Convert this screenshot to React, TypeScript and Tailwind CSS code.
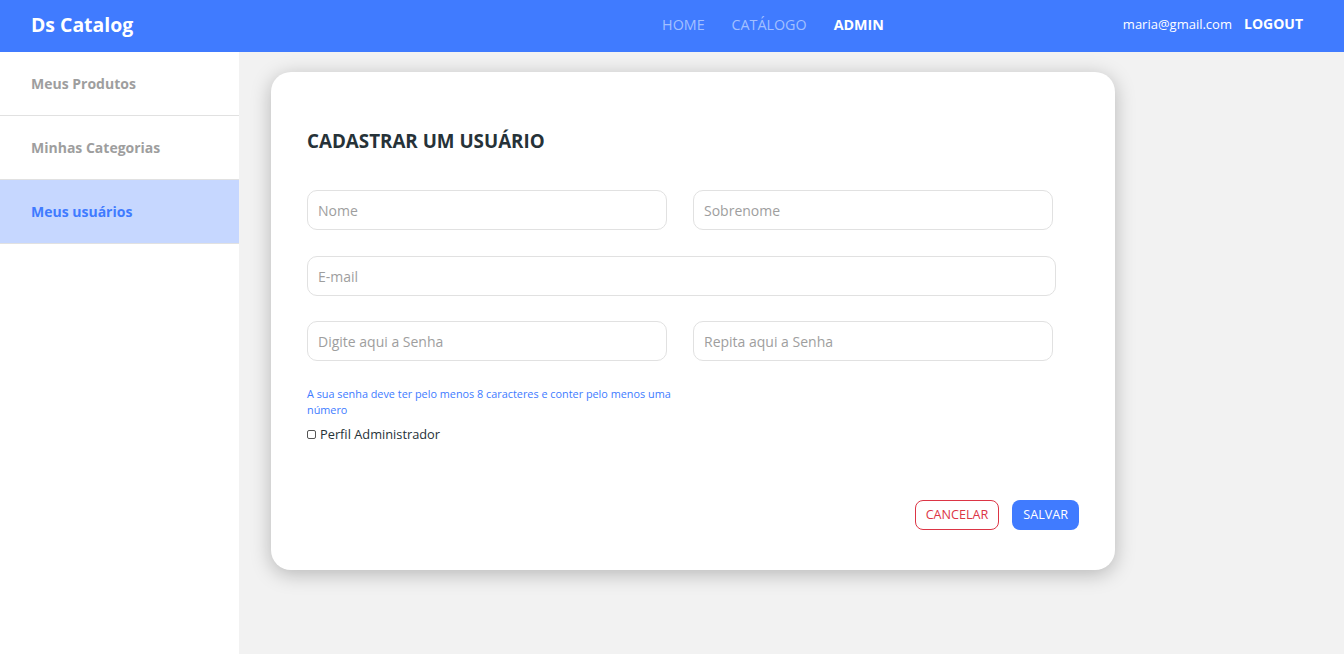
import { useState } from "react";

const font = { fontFamily: '"Open Sans", "Noto Sans", sans-serif' };

const Navbar = () => (
  <nav className="h-[52px] bg-[#407BFF] flex items-center px-[31px] pb-[3px] text-white">
    <a href="#" className="text-[19.4px] font-bold leading-none">Ds Catalog</a>
    <div className="flex items-center gap-[27px] ml-[529px] text-[14.3px] uppercase">
      <a href="#" className="text-[#A3C0FF]">Home</a>
      <a href="#" className="text-[#A3C0FF]">Catálogo</a>
      <a href="#" className="font-bold text-white">Admin</a>
    </div>
    <div className="ml-auto flex items-center gap-[12px] pr-[10px]">
      <span className="text-[13px]">maria@gmail.com</span>
      <a href="#" className="text-[14px] font-bold -mt-[2px]">LOGOUT</a>
    </div>
  </nav>
);

const Sidebar = () => {
  const items = ["Meus Produtos", "Minhas Categorias", "Meus usuários"];
  const active = 2;
  return (
    <aside className="w-[239px] bg-white shrink-0">
      {items.map((it, i) => (
        <div
          key={it}
          className={`h-[64px] flex items-center px-[31px] text-[14px] font-bold border-b border-[#E1E1E1] ${
            i === active ? "bg-[#C6D7FF] text-[#407BFF]" : "text-[#9E9E9E]"
          }`}
        >
          {it}
        </div>
      ))}
    </aside>
  );
};

const Field = ({ placeholder, w, type = "text" }: { placeholder: string; w: string; type?: string }) => (
  <input
    type={type}
    placeholder={placeholder}
    className={`${w} h-[40px] border border-[#E1E1E1] rounded-[10px] px-[10px] text-[14px] text-[#263238] placeholder:text-[#9E9E9E] outline-none`}
  />
);

export default function App() {
  const [admin, setAdmin] = useState(false);
  return (
    <div className="min-h-[654px] h-screen flex flex-col bg-[#F2F2F2]" style={font}>
      <Navbar />
      <div className="flex flex-1">
        <Sidebar />
        <main className="flex-1 pl-[32px] pt-[20px]">
          <div className="w-[844px] bg-white rounded-[20px] shadow-[0_4px_20px_rgba(0,0,0,0.25)] pt-[56px] pb-[40px] px-[36px]">
            <h1 className="text-[18.8px] font-bold leading-[27px] text-[#263238] uppercase">Cadastrar um usuário</h1>
            <div className="mt-[35px] flex flex-col gap-[26px]">
              <div className="flex gap-[26px]">
                <Field placeholder="Nome" w="w-[360px]" />
                <Field placeholder="Sobrenome" w="w-[360px]" />
              </div>
              <Field placeholder="E-mail" w="w-[749px]" />
              <div className="flex gap-[26px] -mt-[1px]">
                <Field placeholder="Digite aqui a Senha" w="w-[360px]" type="password" />
                <Field placeholder="Repita aqui a Senha" w="w-[360px]" type="password" />
              </div>
            </div>
            <p className="mt-[25px] w-[372px] text-[10.85px] leading-[16px] text-[#407BFF]">
              A sua senha deve ter pelo menos 8 caracteres e conter pelo menos uma número
            </p>
            <label className="mt-[8px] flex items-center gap-[4px] text-[12.8px] text-[#263238] leading-[16px]">
              <input
                type="checkbox"
                checked={admin}
                onChange={() => setAdmin(!admin)}
                className="appearance-none w-[9px] h-[9px] border border-[#555] rounded-[2px] bg-white"
              />
              Perfil Administrador
            </label>
            <div className="mt-[58px] flex justify-end gap-[13px]">
              <button className="h-[30px] px-[10px] border border-[#DC3545] text-[#DC3545] rounded-[8px] text-[12.6px] uppercase">
                Cancelar
              </button>
              <button className="h-[30px] px-[11px] bg-[#407BFF] text-white rounded-[8px] text-[12.6px] uppercase">
                Salvar
              </button>
            </div>
          </div>
        </main>
      </div>
    </div>
  );
}
